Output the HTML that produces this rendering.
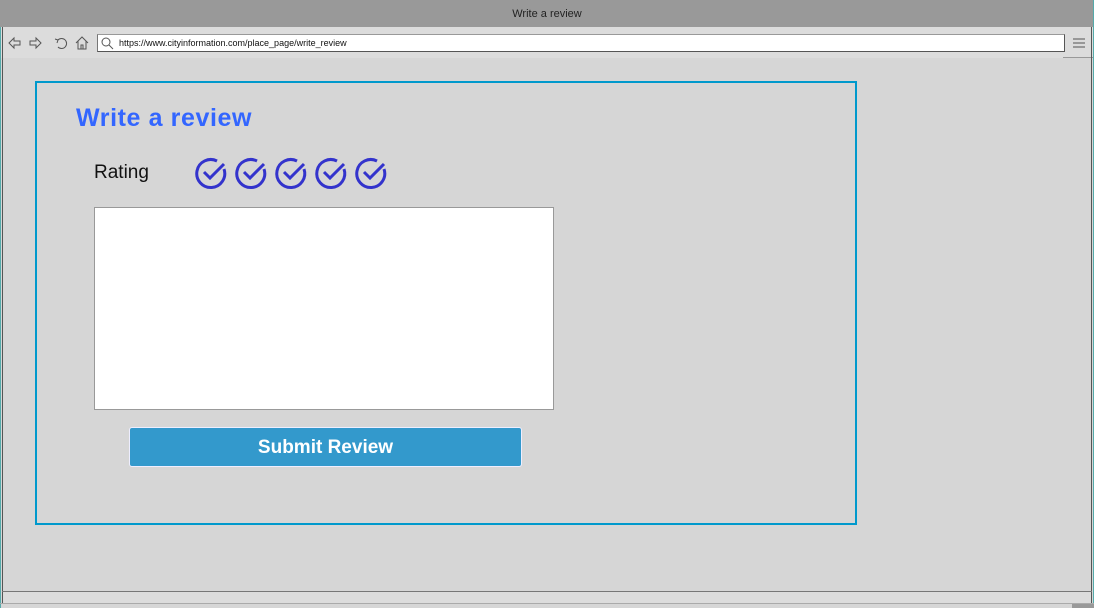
<!DOCTYPE html>
<html><head><style>
body{margin:0;width:1094px;height:608px;overflow:hidden;background:#d6d6d6;font-family:"Liberation Sans",sans-serif;position:relative}
.abs{position:absolute}
</style></head><body>
<div class="abs" style="left:0;top:0;width:1094px;height:27px;background:#999;"></div>
<div class="abs" style="left:0;top:0;width:1094px;height:27px;line-height:28px;text-align:center;font-size:11px;color:#222">Write a review</div>
<div class="abs" style="left:0;top:27px;width:1094px;height:31px;background:#dcdcdc"></div>
<div class="abs" style="left:97px;top:34px;width:966px;height:16px;background:#fff;border:1px solid #555;border-left-color:#777;border-top-color:#999"></div>
<div class="abs" style="left:119px;top:35px;font-size:9px;line-height:16px;color:#111">https://www.cityinformation.com/place_page/write_review</div>
<svg class="abs" style="left:0;top:30px" width="120" height="26">
<g fill="none" stroke="#555" stroke-width="1">
<path d="M9 13 L14 8 L14 11 L20 11 L20 15 L14 15 L14 18 Z"/>
<path d="M41 13 L36 8 L36 11 L30 11 L30 15 L36 15 L36 18 Z"/>
<path d="M58 10 A5 5 0 1 1 58 17 M55 9 L58 10 L57 13"/>
<path d="M76 13 L82 7 L88 13 M78 11 L78 19 L86 19 L86 11 M81 19 L81 15 L83 15 L83 19"/>
<circle cx="106" cy="12" r="4"/><path d="M109 15 L113 19"/>
</g></svg>
<svg class="abs" style="left:1072px;top:36px" width="14" height="14"><g stroke="#555"><path d="M1 3H13M1 7H13M1 11H13"/></g></svg>
<div class="abs" style="left:1063px;top:57px;width:30px;height:1px;background:#999"></div>
<div class="abs" style="left:2px;top:27px;width:1px;height:576px;background:#555"></div>
<div class="abs" style="left:0;top:27px;width:1px;height:581px;background:#5aa"></div>
<div class="abs" style="left:1091px;top:27px;width:1px;height:576px;background:#555"></div>
<div class="abs" style="left:1093px;top:0;width:1px;height:608px;background:#5aa"></div>
<div class="abs" style="left:2px;top:591px;width:1090px;height:1px;background:#777"></div>
<div class="abs" style="left:3px;top:592px;width:1088px;height:11px;background:#dcdcdc"></div>
<div class="abs" style="left:0;top:603px;width:1094px;height:1px;background:#aaa"></div>
<div class="abs" style="left:1072px;top:604px;width:22px;height:4px;background:#999"></div>

<div class="abs" style="left:35px;top:81px;width:818px;height:440px;border:2px solid #0099cc"></div>
<div class="abs" style="left:76px;top:104px;font-size:25px;letter-spacing:0.6px;font-weight:bold;color:#3366ff">Write a review</div>
<div class="abs" style="left:94px;top:162px;font-size:19px;color:#111">Rating</div>
<svg class="abs" style="left:195px;top:153px" width="200" height="40">
<defs><g id="c" fill="none" stroke="#3333cc" stroke-width="3"><path d="M29 16 A14 14 0 1 1 22 8"/><path d="M9 19 L15 25 L29 11"/></g></defs>
<use href="#c"/>
<use href="#c" transform="translate(40 0)"/>
<use href="#c" transform="translate(80 0)"/>
<use href="#c" transform="translate(120 0)"/>
<use href="#c" transform="translate(160 0)"/>
</svg>
<div class="abs" style="left:94px;top:207px;width:458px;height:201px;background:#fff;border:1px solid #999"></div>
<div class="abs" style="left:129px;top:427px;width:391px;height:38px;background:#3399cc;border:1px solid #eef;border-radius:3px;color:#fff;font-weight:bold;font-size:19px;text-align:center;line-height:40px">Submit Review</div>
</body></html>
